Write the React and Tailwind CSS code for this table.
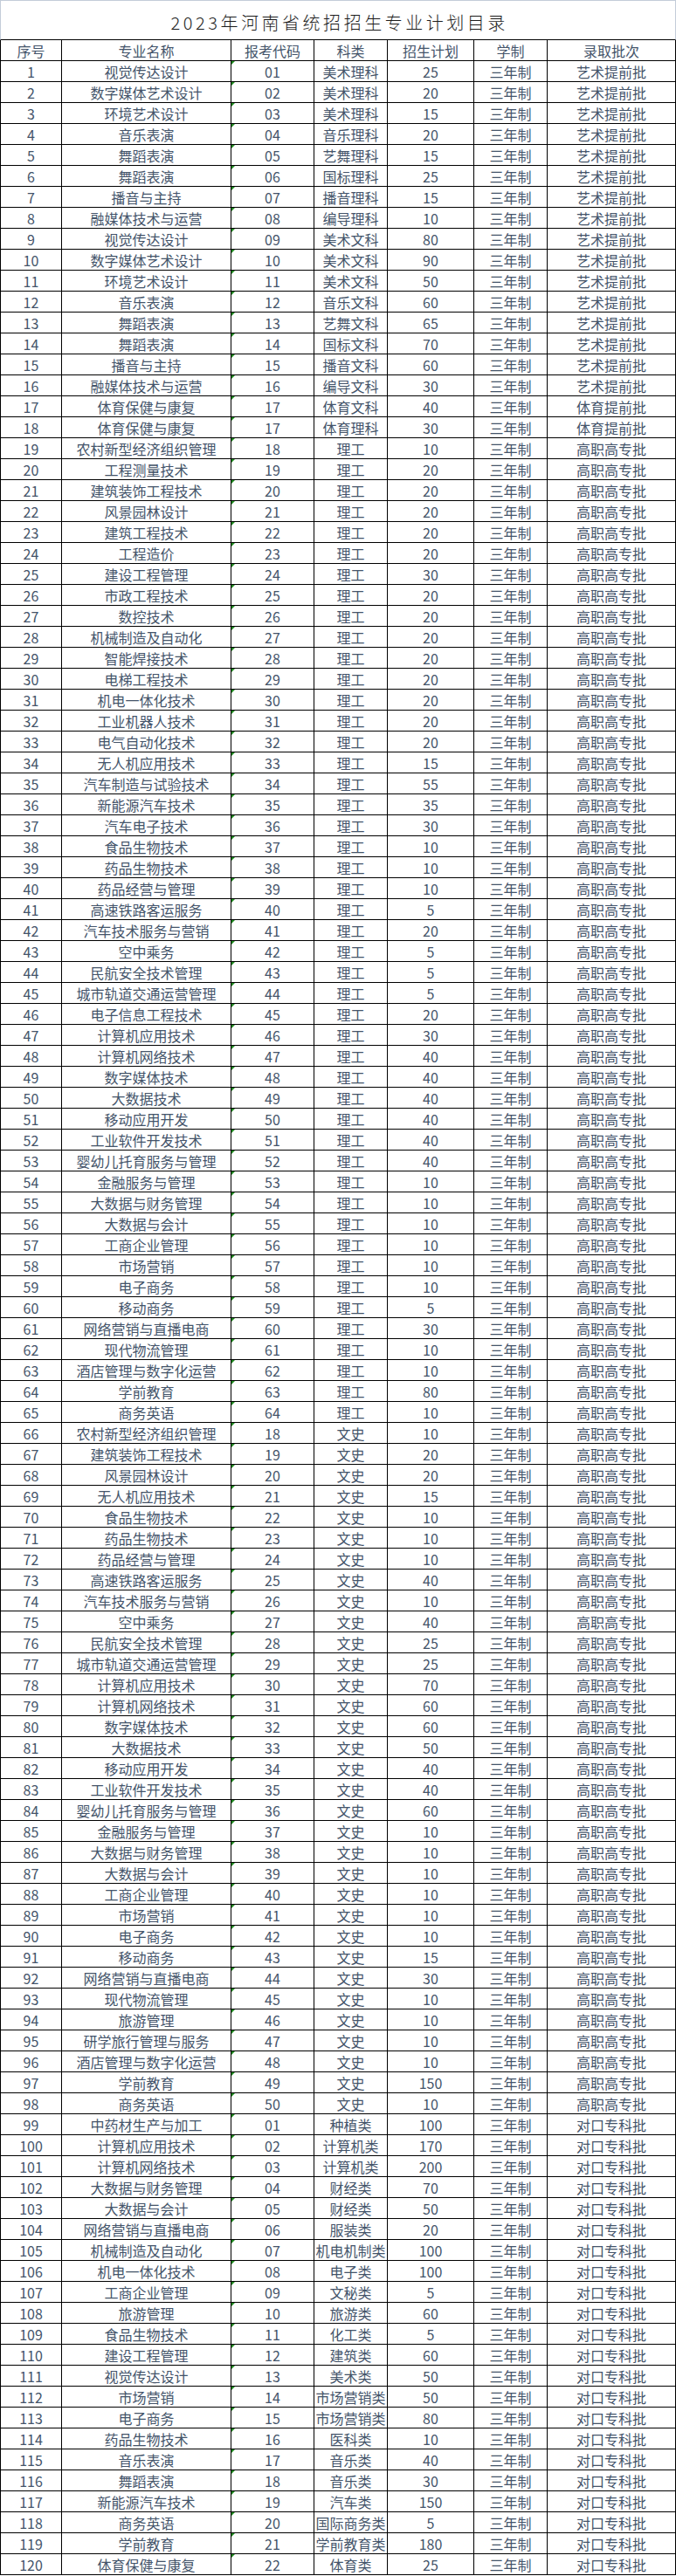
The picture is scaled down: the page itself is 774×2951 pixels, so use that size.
import React from "react"

const raw = `视觉传达设计|01|美术理科|25|艺术提前批
数字媒体艺术设计|02|美术理科|20|艺术提前批
环境艺术设计|03|美术理科|15|艺术提前批
音乐表演|04|音乐理科|20|艺术提前批
舞蹈表演|05|艺舞理科|15|艺术提前批
舞蹈表演|06|国标理科|25|艺术提前批
播音与主持|07|播音理科|15|艺术提前批
融媒体技术与运营|08|编导理科|10|艺术提前批
视觉传达设计|09|美术文科|80|艺术提前批
数字媒体艺术设计|10|美术文科|90|艺术提前批
环境艺术设计|11|美术文科|50|艺术提前批
音乐表演|12|音乐文科|60|艺术提前批
舞蹈表演|13|艺舞文科|65|艺术提前批
舞蹈表演|14|国标文科|70|艺术提前批
播音与主持|15|播音文科|60|艺术提前批
融媒体技术与运营|16|编导文科|30|艺术提前批
体育保健与康复|17|体育文科|40|体育提前批
体育保健与康复|17|体育理科|30|体育提前批
农村新型经济组织管理|18|理工|10|高职高专批
工程测量技术|19|理工|20|高职高专批
建筑装饰工程技术|20|理工|20|高职高专批
风景园林设计|21|理工|20|高职高专批
建筑工程技术|22|理工|20|高职高专批
工程造价|23|理工|20|高职高专批
建设工程管理|24|理工|30|高职高专批
市政工程技术|25|理工|20|高职高专批
数控技术|26|理工|20|高职高专批
机械制造及自动化|27|理工|20|高职高专批
智能焊接技术|28|理工|20|高职高专批
电梯工程技术|29|理工|20|高职高专批
机电一体化技术|30|理工|20|高职高专批
工业机器人技术|31|理工|20|高职高专批
电气自动化技术|32|理工|20|高职高专批
无人机应用技术|33|理工|15|高职高专批
汽车制造与试验技术|34|理工|55|高职高专批
新能源汽车技术|35|理工|35|高职高专批
汽车电子技术|36|理工|30|高职高专批
食品生物技术|37|理工|10|高职高专批
药品生物技术|38|理工|10|高职高专批
药品经营与管理|39|理工|10|高职高专批
高速铁路客运服务|40|理工|5|高职高专批
汽车技术服务与营销|41|理工|20|高职高专批
空中乘务|42|理工|5|高职高专批
民航安全技术管理|43|理工|5|高职高专批
城市轨道交通运营管理|44|理工|5|高职高专批
电子信息工程技术|45|理工|20|高职高专批
计算机应用技术|46|理工|30|高职高专批
计算机网络技术|47|理工|40|高职高专批
数字媒体技术|48|理工|40|高职高专批
大数据技术|49|理工|40|高职高专批
移动应用开发|50|理工|40|高职高专批
工业软件开发技术|51|理工|40|高职高专批
婴幼儿托育服务与管理|52|理工|40|高职高专批
金融服务与管理|53|理工|10|高职高专批
大数据与财务管理|54|理工|10|高职高专批
大数据与会计|55|理工|10|高职高专批
工商企业管理|56|理工|10|高职高专批
市场营销|57|理工|10|高职高专批
电子商务|58|理工|10|高职高专批
移动商务|59|理工|5|高职高专批
网络营销与直播电商|60|理工|30|高职高专批
现代物流管理|61|理工|10|高职高专批
酒店管理与数字化运营|62|理工|10|高职高专批
学前教育|63|理工|80|高职高专批
商务英语|64|理工|10|高职高专批
农村新型经济组织管理|18|文史|10|高职高专批
建筑装饰工程技术|19|文史|20|高职高专批
风景园林设计|20|文史|20|高职高专批
无人机应用技术|21|文史|15|高职高专批
食品生物技术|22|文史|10|高职高专批
药品生物技术|23|文史|10|高职高专批
药品经营与管理|24|文史|10|高职高专批
高速铁路客运服务|25|文史|40|高职高专批
汽车技术服务与营销|26|文史|10|高职高专批
空中乘务|27|文史|40|高职高专批
民航安全技术管理|28|文史|25|高职高专批
城市轨道交通运营管理|29|文史|25|高职高专批
计算机应用技术|30|文史|70|高职高专批
计算机网络技术|31|文史|60|高职高专批
数字媒体技术|32|文史|60|高职高专批
大数据技术|33|文史|50|高职高专批
移动应用开发|34|文史|40|高职高专批
工业软件开发技术|35|文史|40|高职高专批
婴幼儿托育服务与管理|36|文史|60|高职高专批
金融服务与管理|37|文史|10|高职高专批
大数据与财务管理|38|文史|10|高职高专批
大数据与会计|39|文史|10|高职高专批
工商企业管理|40|文史|10|高职高专批
市场营销|41|文史|10|高职高专批
电子商务|42|文史|10|高职高专批
移动商务|43|文史|15|高职高专批
网络营销与直播电商|44|文史|30|高职高专批
现代物流管理|45|文史|10|高职高专批
旅游管理|46|文史|10|高职高专批
研学旅行管理与服务|47|文史|10|高职高专批
酒店管理与数字化运营|48|文史|10|高职高专批
学前教育|49|文史|150|高职高专批
商务英语|50|文史|10|高职高专批
中药材生产与加工|01|种植类|100|对口专科批
计算机应用技术|02|计算机类|170|对口专科批
计算机网络技术|03|计算机类|200|对口专科批
大数据与财务管理|04|财经类|70|对口专科批
大数据与会计|05|财经类|50|对口专科批
网络营销与直播电商|06|服装类|20|对口专科批
机械制造及自动化|07|机电机制类|100|对口专科批
机电一体化技术|08|电子类|100|对口专科批
工商企业管理|09|文秘类|5|对口专科批
旅游管理|10|旅游类|60|对口专科批
食品生物技术|11|化工类|5|对口专科批
建设工程管理|12|建筑类|60|对口专科批
视觉传达设计|13|美术类|50|对口专科批
市场营销|14|市场营销类|50|对口专科批
电子商务|15|市场营销类|80|对口专科批
药品生物技术|16|医科类|10|对口专科批
音乐表演|17|音乐类|40|对口专科批
舞蹈表演|18|音乐类|30|对口专科批
新能源汽车技术|19|汽车类|150|对口专科批
商务英语|20|国际商务类|5|对口专科批
学前教育|21|学前教育类|180|对口专科批
体育保健与康复|22|体育类|25|对口专科批`

const rows = raw.split("\n").map((line) => line.split("|"))
const title = "2023年河南省统招招生专业计划目录".split("")

const grid = "grid grid-cols-[70px_194px_95px_84px_99px_84px_1fr] h-6 border-b border-black"
const cell = "flex items-center justify-center border-r border-black whitespace-nowrap"

const App = () => (
  <div className="w-[774px] bg-white text-[16px] leading-none text-[#44546a] font-['Noto_Sans_CJK_SC','Noto_Sans',sans-serif]">
    <div className="h-[46px] flex items-center justify-center pt-[6px] border-t border-l border-r border-[#c3ccd9] border-b border-b-black">
      <h1 className="w-[383px] flex justify-between text-[20px] text-[#1c1c1c] font-light">
        {title.map((ch, i) => (
          <span key={i}>{ch}</span>
        ))}
      </h1>
    </div>
    <div className="border-l border-r border-black">
      <div className={grid}>
        <div className={cell}>序号</div>
        <div className={cell}>专业名称</div>
        <div className={cell}>报考代码</div>
        <div className={cell}>科类</div>
        <div className={cell}>招生计划</div>
        <div className={cell}>学制</div>
        <div className="flex items-center justify-center">录取批次</div>
      </div>
      {rows.map(([name, code, kind, plan, batch], i) => (
        <div key={i} className={grid}>
          <div className={cell}>{i + 1}</div>
          <div className={cell}>{name}</div>
          <div className={cell + " relative"}>
            <span className="absolute top-0 left-0 w-0 h-0 border-t-[4px] border-t-[#1f8a1f] border-r-[4px] border-r-transparent" />
            {code}
          </div>
          <div className={cell}>{kind}</div>
          <div className={cell}>{plan}</div>
          <div className={cell}>三年制</div>
          <div className="flex items-center justify-center">{batch}</div>
        </div>
      ))}
    </div>
  </div>
)

export default App
